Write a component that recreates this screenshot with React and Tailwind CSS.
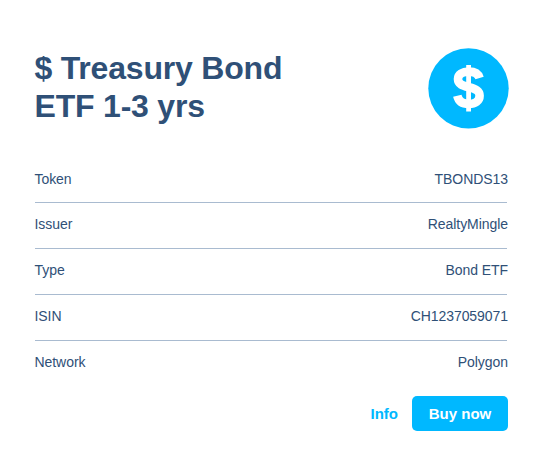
const rows = [
  ["Token", "TBONDS13"],
  ["Issuer", "RealtyMingle"],
  ["Type", "Bond ETF"],
  ["ISIN", "CH1237059071"],
  ["Network", "Polygon"],
];

function DollarBadge() {
  return (
    <svg className="-mr-px h-[82px] w-[81px]" viewBox="0 0 81 82" aria-hidden="true">
      <circle cx="40.5" cy="40.4" r="40.2" fill="#00b8ff" />
      <path
        d="M51.6 30C50.2 25.6 46.7 23.6 40.8 23.6C34.4 23.6 30 26.2 30 31C30 36.3 34.7 37.6 40.8 39.2C47.6 41 51.6 42.7 51.6 47.8C51.6 53 47.2 56 40.8 56C34.2 56 30.6 53.4 29.3 47.8"
        fill="none"
        stroke="#fff"
        strokeWidth="8.6"
      />
      <path d="M38.2 17h4.8v46.5h-4.8z" fill="#fff" />
    </svg>
  );
}

export default function App() {
  return (
    <main className="h-[466px] w-[540px] overflow-hidden bg-white pl-[34.5px] pr-8 pt-12 font-['Liberation_Sans',Arial,sans-serif] text-[#2f5077]">
      <header className="flex h-[109px] items-start justify-between">
        <h1 className="pt-px text-[32px] font-bold leading-[38px] tracking-[-0.2px]">
          $ Treasury Bond
          <br />
          ETF 1-3 yrs
        </h1>
        <DollarBadge />
      </header>
      <dl className="text-[14px] leading-5 tracking-[-0.06px]">
        {rows.map(([label, value]) => (
          <div
            key={label}
            className="mr-px flex h-[46px] items-start justify-between border-b border-[#a9bbd0] pt-[11px] first:pt-3 last:border-b-0"
          >
            <dt>{label}</dt>
            <dd className="-mr-px">{value}</dd>
          </div>
        ))}
      </dl>
      <div className="flex items-start justify-end gap-[14px] pt-[9px] text-[15px] font-bold">
        <button className="h-9 text-[#00b8ff]">Info</button>
        <button className="h-[35px] w-24 rounded-[5px] bg-[#00b8ff] pt-px text-white">Buy now</button>
      </div>
    </main>
  );
}
